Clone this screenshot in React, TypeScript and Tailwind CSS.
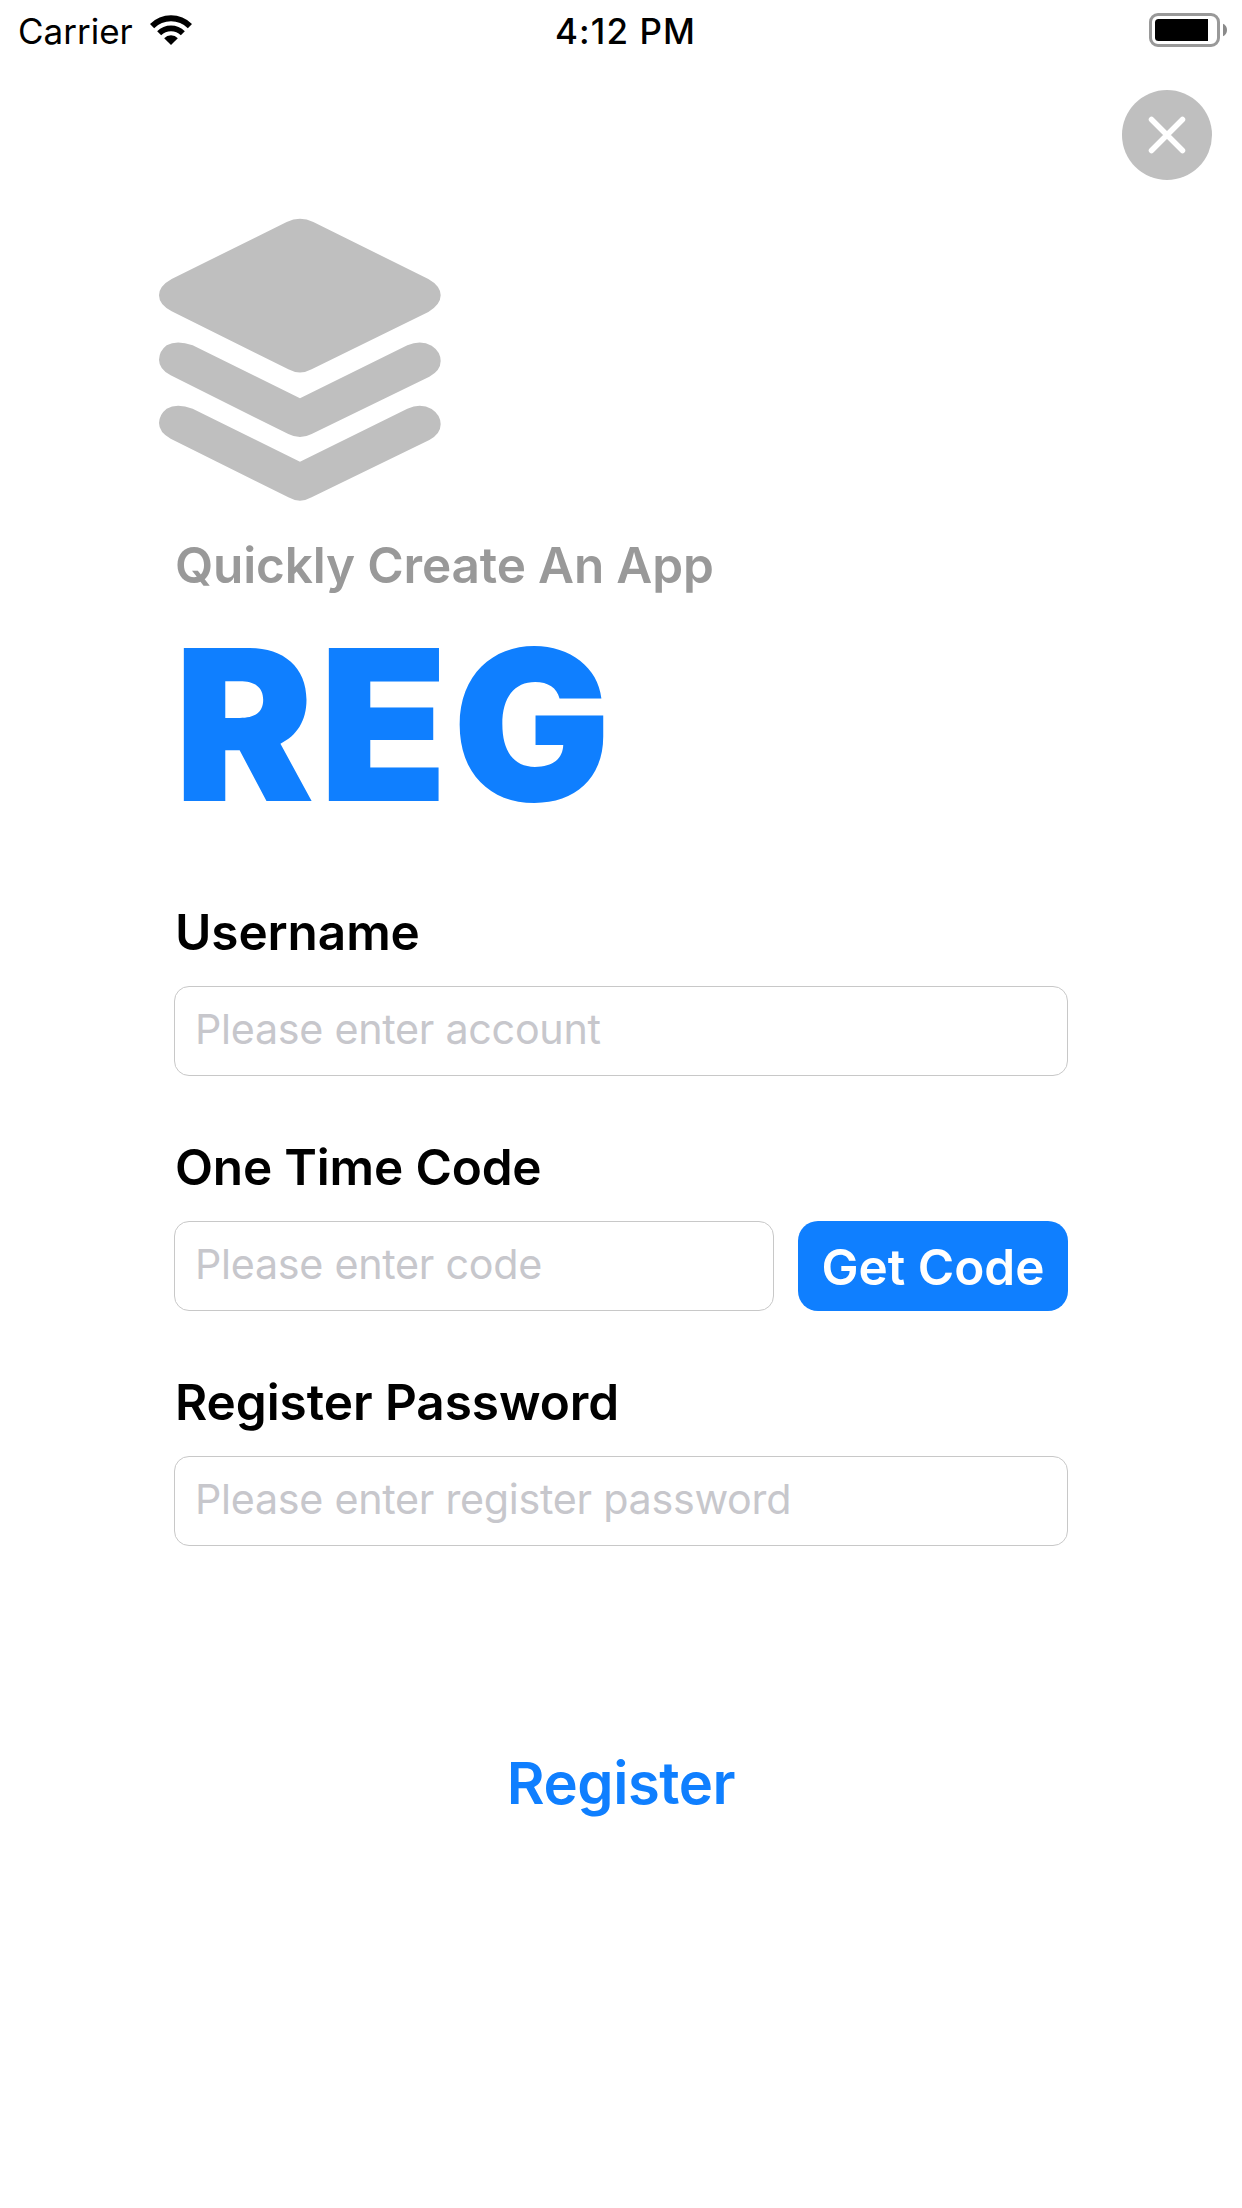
function WifiIcon() {
  return (
    <svg className="h-[30px] w-[42px]" viewBox="0 0 126 90" fill="#000" aria-hidden="true">
      <path d="M0 27A89 89 0 0 1 126 27L113.500 39.500A72 72 0 0 0 12.500 39.500Z" />
      <path d="M21.500 48.500A59 59 0 0 1 104.500 48.500L92.500 60.500A42 42 0 0 0 33.500 60.500Z" />
      <path d="M42.500 70A28 28 0 0 1 83.500 70L63 90Z" />
    </svg>
  );
}

function BatteryIcon() {
  return (
    <svg className="h-[34px] w-[78px]" viewBox="0 0 78 34" aria-hidden="true">
      <rect x="1.500" y="1.500" width="68" height="31" rx="7.500" fill="none" stroke="#999" strokeWidth="3" />
      <path d="M59 6V28H9.500A3.500 3.500 0 0 1 6 24.500V9.500A3.500 3.500 0 0 1 9.500 6Z" fill="#000" />
      <path d="M74 10.700C76.600 11.800 78 14.200 78 17C78 19.800 76.600 22.200 74 23.300Z" fill="#8a8a8a" />
    </svg>
  );
}

function StackLogo() {
  return (
    <svg className="h-[300px] w-[300px]" viewBox="0 0 900 900" fill="#bfbfbf" aria-hidden="true">
      <path d="M410 51Q450 32 490 51L835 222Q872 243 872 271Q872 299 835 321L485 493Q450 512 415 493L65 319Q27 299 27 271Q27 243 65 222Z" />
      <path d="M128 421L450 580L772 421Q812 403 845 422Q872 440 872 468Q872 497 838 515L485 687Q450 705 415 687L62 511Q27 492 27 464Q28 438 50 421Q80 404 128 421Z" />
      <path d="M128 611L450 770L772 611Q812 593 845 612Q872 630 872 658Q872 687 838 705L485 877Q450 897 415 877L62 701Q27 682 27 654Q28 628 50 611Q80 594 128 611Z" />
    </svg>
  );
}

const labelClass = "block pl-px text-[49.5px] leading-[60px] font-semibold text-black";
const inputClass =
  "block h-[90px] rounded-[15px] border border-[#c8c8c8] bg-white pl-5 pr-4 pb-1 text-[41.25px] tracking-[-0.28px] text-black outline-none placeholder:text-[#c7c7cc] placeholder:opacity-100";

export default function App() {
  return (
    <div className="flex h-[2208px] w-[1242px] flex-col bg-white font-['Inter',sans-serif]">
      <header className="flex h-[60px] items-center pr-[15px] text-[35px] leading-[60px] text-black">
        <div className="flex w-[555px] items-center pl-[18px]">
          <span className="pt-px">Carrier</span>
          <span className="ml-[17px]">
            <WifiIcon />
          </span>
        </div>
        <span className="pt-px font-medium tracking-[1.1px]">4:12 PM</span>
        <span className="ml-auto">
          <BatteryIcon />
        </span>
      </header>

      <div className="flex justify-end pt-[30px] pr-[30px]">
        <button className="flex size-[90px] items-center justify-center rounded-full bg-[#bfbfbf]" aria-label="Close">
          <svg className="size-[40px]" viewBox="0 0 40 40" stroke="#fff" strokeWidth="5.500" strokeLinecap="round" aria-hidden="true">
            <path d="M4.500 4.500L35.500 35.500M35.500 4.500L4.500 35.500" />
          </svg>
        </button>
      </div>

      <main className="mx-auto mt-[25px] flex w-[894px] flex-col">
        <div className="-ml-6">
          <StackLogo />
        </div>
        <p className="mt-[30px] pl-px text-[49.5px] leading-[60px] font-semibold tracking-[-0.16px] text-[#999]">
          Quickly Create An App
        </p>
        <h1 className="mt-[25px] text-[210px] leading-[210px] font-black tracking-[4.8px] text-[#0f7fff]">REG</h1>

        <form className="mt-[72px] flex flex-col gap-[61px]">
          <div className="flex flex-col gap-6">
            <label className={`${labelClass} tracking-[-0.1px]`}>Username</label>
            <input className={`${inputClass} w-full`} placeholder="Please enter account" />
          </div>
          <div className="flex flex-col gap-6">
            <label className={`${labelClass} tracking-[-0.18px]`}>One Time Code</label>
            <div className="flex gap-6">
              <input className={`${inputClass} w-[600px]`} placeholder="Please enter code" />
              <button
                type="button"
                className="h-[90px] w-[270px] rounded-[20px] bg-[#0f7fff] pt-0.5 text-[49.5px] leading-[60px] font-semibold whitespace-nowrap text-white"
              >
                Get Code
              </button>
            </div>
          </div>
          <div className="flex flex-col gap-6">
            <label className={`${labelClass} tracking-[-0.06px]`}>Register Password</label>
            <input className={`${inputClass} w-full`} placeholder="Please enter register password" />
          </div>
        </form>

        <button className="mt-[202px] self-center text-[58px] leading-[70px] font-semibold tracking-[-0.45px] text-[#0f7fff]">
          Register
        </button>
      </main>
    </div>
  );
}
